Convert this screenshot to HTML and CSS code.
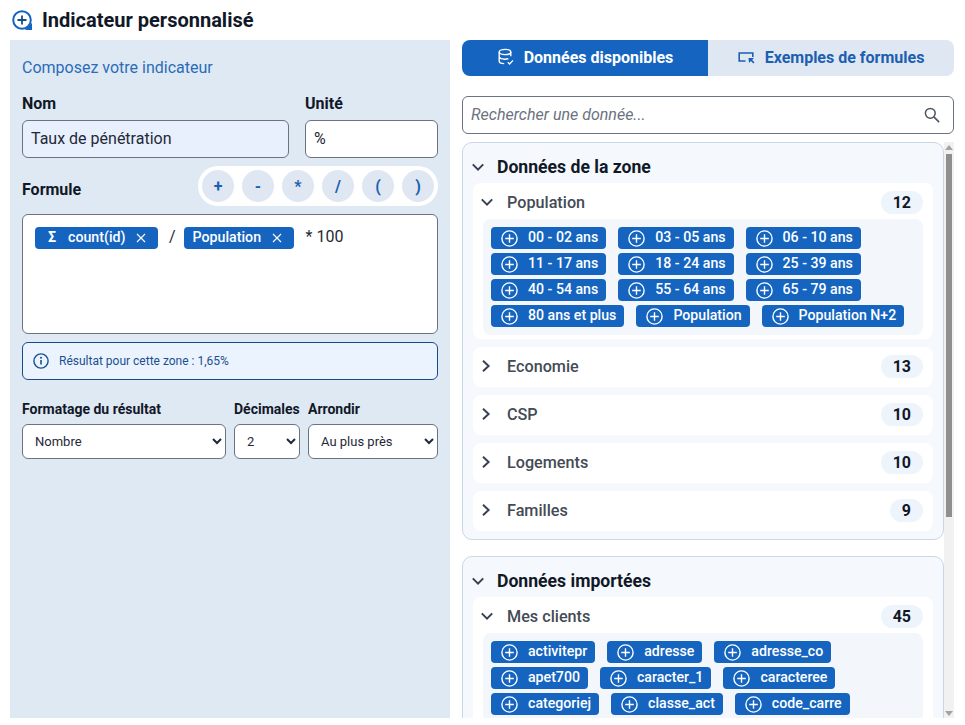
FILE: index.html

```html
<!DOCTYPE html>
<html lang="fr">
<head>
  <meta charset="UTF-8">
  <title>Indicateur personnalisé</title>
  <link rel="stylesheet" href="styles.css">
</head>
<body>

  <svg class="icon-defs" width="0" height="0">
    <symbol id="i-plus" viewBox="0 0 17 17">
      <circle cx="8.5" cy="8.5" r="7.6" fill="none" stroke="currentColor" stroke-width="1.4"/>
      <path d="M8.5 4.2v8.6M4.2 8.5h8.6" fill="none" stroke="currentColor" stroke-width="1.4"/>
    </symbol>
    <symbol id="i-close" viewBox="0 0 12 12">
      <path d="M1.2 1.2l9.6 9.6M10.8 1.2l-9.6 9.6" fill="none" stroke="currentColor" stroke-width="1.3"/>
    </symbol>
    <symbol id="i-down" viewBox="0 0 12 12">
      <path d="M.8 3.4L6 8.6l5.2-5.2" fill="none" stroke="currentColor" stroke-width="2"/>
    </symbol>
    <symbol id="i-right" viewBox="0 0 12 12">
      <path d="M2 .8L7.6 6 2 11.2" fill="none" stroke="currentColor" stroke-width="2"/>
    </symbol>
  </svg>

  <header class="page-title">
    <svg class="title-icon" viewBox="0 0 20 20">
      <circle cx="10" cy="10" r="8.8" fill="none" stroke="#1565c0" stroke-width="2"/>
      <path d="M10 5.5v9M5.5 10h9" fill="none" stroke="#1a4a8a" stroke-width="1.8"/>
      <path d="M16 16.5L20 13v7h-7z" fill="#1565c0"/>
    </svg>
    <h1>Indicateur personnalisé</h1>
  </header>

  <div class="columns">
    <section class="editor-panel">
      <h2 class="panel-title">Composez votre indicateur</h2>

      <div class="name-row">
        <label class="field field-name">
          <span class="field-label">Nom</span>
          <input class="text-input text-input-filled" type="text" value="Taux de pénétration">
        </label>
        <label class="field field-unit">
          <span class="field-label">Unité</span>
          <input class="text-input" type="text" value="%">
        </label>
      </div>

      <div class="formula-head">
        <span class="field-label">Formule</span>
        <div class="operators">
          <button class="operator">+</button>
          <button class="operator">-</button>
          <button class="operator">*</button>
          <button class="operator">/</button>
          <button class="operator">(</button>
          <button class="operator">)</button>
        </div>
      </div>

      <div class="formula-box">
        <span class="token token-count">
          <span class="sigma">Σ</span>
          count(id)
          <svg class="token-close"><use href="#i-close"/></svg>
        </span>
        <span class="formula-text formula-slash">/</span>
        <span class="token token-pop">
          Population
          <svg class="token-close"><use href="#i-close"/></svg>
        </span>
        <span class="formula-text">* 100</span>
      </div>

      <div class="result-box">
        <svg class="info-icon" viewBox="0 0 16 16">
          <circle cx="8" cy="8" r="7.1" fill="none" stroke="currentColor" stroke-width="1.4"/>
          <path d="M8 7v4.6" fill="none" stroke="currentColor" stroke-width="1.6"/>
          <circle cx="8" cy="4.7" r="1" fill="currentColor"/>
        </svg>
        Résultat pour cette zone : 1,65%
      </div>

      <div class="format-row">
        <label class="field field-format">
          <span class="field-label field-label-small">Formatage du résultat</span>
          <select class="select-input"><option>Nombre</option></select>
        </label>
        <label class="field field-decimals">
          <span class="field-label field-label-small">Décimales</span>
          <select class="select-input"><option>2</option></select>
        </label>
        <label class="field field-round">
          <span class="field-label field-label-small">Arrondir</span>
          <select class="select-input"><option>Au plus près</option></select>
        </label>
      </div>
    </section>

    <section class="data-panel">
      <div class="tabs">
        <button class="tab tab-active">
          <svg class="tab-icon" viewBox="0 0 18 18">
            <ellipse cx="8" cy="4" rx="5.8" ry="2.6" fill="none" stroke="currentColor" stroke-width="1.4"/>
            <path d="M2.2 4v9c0 1.5 2.3 2.6 5 2.6M13.8 4v4.2M2.2 8.6c0 1.5 2.6 2.6 5.8 2.6 1.2 0 2.4-.2 3.4-.5" fill="none" stroke="currentColor" stroke-width="1.4"/>
            <path d="M10.8 14.2l1.8 1.8 3.4-3.6" fill="none" stroke="currentColor" stroke-width="1.3"/>
          </svg>
          Données disponibles
        </button>
        <button class="tab">
          <svg class="tab-icon" viewBox="0 0 18 18">
            <path d="M7.5 13H1.2V5h13.6v4" fill="none" stroke="currentColor" stroke-width="1.6"/>
            <path d="M10.5 10h5.5l-1.9 1.9 2.4 2.4-1.2 1.2-2.4-2.4-1.9 1.9z" fill="currentColor"/>
          </svg>
          Exemples de formules
        </button>
      </div>

      <div class="search-box">
        <input class="search-input" type="text" placeholder="Rechercher une donnée...">
        <svg class="search-icon" viewBox="0 0 16 16">
          <circle cx="6.3" cy="6.3" r="4.9" fill="none" stroke="currentColor" stroke-width="1.5"/>
          <path d="M9.9 9.9l5.2 5.2" fill="none" stroke="currentColor" stroke-width="1.6"/>
        </svg>
      </div>

      <div class="data-list">
        <div class="data-scroll">
          <div class="data-group">
            <h3 class="group-title"><svg class="chevron-big"><use href="#i-down"/></svg>Données de la zone</h3>

            <div class="sub-card">
              <div class="sub-head">
                <svg class="chevron"><use href="#i-down"/></svg>
                <span class="sub-name">Population</span>
                <span class="count">12</span>
              </div>
              <div class="chip-list">
                <span class="chip"><svg class="chip-icon"><use href="#i-plus"/></svg>00 - 02 ans</span>
                <span class="chip"><svg class="chip-icon"><use href="#i-plus"/></svg>03 - 05 ans</span>
                <span class="chip"><svg class="chip-icon"><use href="#i-plus"/></svg>06 - 10 ans</span>
                <span class="chip"><svg class="chip-icon"><use href="#i-plus"/></svg>11 - 17 ans</span>
                <span class="chip"><svg class="chip-icon"><use href="#i-plus"/></svg>18 - 24 ans</span>
                <span class="chip"><svg class="chip-icon"><use href="#i-plus"/></svg>25 - 39 ans</span>
                <span class="chip"><svg class="chip-icon"><use href="#i-plus"/></svg>40 - 54 ans</span>
                <span class="chip"><svg class="chip-icon"><use href="#i-plus"/></svg>55 - 64 ans</span>
                <span class="chip"><svg class="chip-icon"><use href="#i-plus"/></svg>65 - 79 ans</span>
                <span class="chip"><svg class="chip-icon"><use href="#i-plus"/></svg>80 ans et plus</span>
                <span class="chip"><svg class="chip-icon"><use href="#i-plus"/></svg>Population</span>
                <span class="chip"><svg class="chip-icon"><use href="#i-plus"/></svg>Population N+2</span>
              </div>
            </div>

            <div class="sub-card">
              <div class="sub-head sub-head-closed">
                <svg class="chevron"><use href="#i-right"/></svg>
                <span class="sub-name">Economie</span>
                <span class="count">13</span>
              </div>
            </div>
            <div class="sub-card">
              <div class="sub-head sub-head-closed">
                <svg class="chevron"><use href="#i-right"/></svg>
                <span class="sub-name">CSP</span>
                <span class="count">10</span>
              </div>
            </div>
            <div class="sub-card">
              <div class="sub-head sub-head-closed">
                <svg class="chevron"><use href="#i-right"/></svg>
                <span class="sub-name">Logements</span>
                <span class="count">10</span>
              </div>
            </div>
            <div class="sub-card">
              <div class="sub-head sub-head-closed">
                <svg class="chevron"><use href="#i-right"/></svg>
                <span class="sub-name">Familles</span>
                <span class="count">9</span>
              </div>
            </div>
          </div>

          <div class="data-group">
            <h3 class="group-title"><svg class="chevron-big"><use href="#i-down"/></svg>Données importées</h3>

            <div class="sub-card">
              <div class="sub-head">
                <svg class="chevron"><use href="#i-down"/></svg>
                <span class="sub-name">Mes clients</span>
                <span class="count">45</span>
              </div>
              <div class="chip-list">
                <span class="chip"><svg class="chip-icon"><use href="#i-plus"/></svg>activitepr</span>
                <span class="chip"><svg class="chip-icon"><use href="#i-plus"/></svg>adresse</span>
                <span class="chip"><svg class="chip-icon"><use href="#i-plus"/></svg>adresse_co</span>
                <span class="chip"><svg class="chip-icon"><use href="#i-plus"/></svg>apet700</span>
                <span class="chip"><svg class="chip-icon"><use href="#i-plus"/></svg>caracter_1</span>
                <span class="chip"><svg class="chip-icon"><use href="#i-plus"/></svg>caracteree</span>
                <span class="chip"><svg class="chip-icon"><use href="#i-plus"/></svg>categoriej</span>
                <span class="chip"><svg class="chip-icon"><use href="#i-plus"/></svg>classe_act</span>
                <span class="chip"><svg class="chip-icon"><use href="#i-plus"/></svg>code_carre</span>
              </div>
            </div>
          </div>
        </div>

        <div class="scroll-rail">
          <span class="rail-arrow rail-arrow-up"></span>
          <span class="rail-thumb"></span>
          <span class="rail-arrow rail-arrow-down"></span>
        </div>
      </div>
    </section>
  </div>

</body>
</html>
```

FILE: styles.css

```css
* {
  box-sizing: border-box;
}

html, body {
  height: 100%;
}

body {
  margin: 0;
  background: #ffffff;
  color: #111827;
  font-family: Roboto, "Liberation Sans", sans-serif;
  overflow: hidden;
}

.icon-defs {
  position: absolute;
}

button {
  font-family: inherit;
  border: none;
  cursor: pointer;
}

/* title */
.page-title {
  display: flex;
  align-items: center;
  gap: 10px;
  height: 40px;
  padding-left: 12px;
}

.title-icon {
  width: 20px;
  height: 20px;
}

.page-title h1 {
  margin: 0;
  font-size: 20px;
  font-weight: 700;
  color: #111827;
}

.columns {
  display: flex;
  gap: 12px;
  height: 678px;
  padding: 0 11px 0 10px;
}

/* left panel */
.editor-panel {
  width: 440px;
  flex: none;
  background: #dfe9f4;
  padding: 18px 12px;
}

.panel-title {
  margin: 0 0 18px;
  font-size: 16px;
  line-height: 19px;
  font-weight: 400;
  color: #2b6cb8;
}

.name-row {
  display: flex;
  gap: 16px;
}

.field {
  display: flex;
  flex-direction: column;
}

.field-name {
  width: 267px;
}

.field-unit {
  flex: 1;
}

.field-label {
  font-size: 16px;
  line-height: 18px;
  font-weight: 700;
  color: #111827;
  margin-bottom: 7px;
}

.field-label-small {
  font-size: 14px;
  line-height: 16px;
  white-space: nowrap;
}

.text-input {
  width: 100%;
  height: 38px;
  padding: 0 8px 2px;
  border: 1px solid #6b7280;
  border-radius: 6px;
  background: #ffffff;
  font-family: inherit;
  font-size: 16px;
  color: #1f2937;
}

.text-input-filled {
  background: #e8f0fe;
}

.formula-head {
  display: flex;
  justify-content: space-between;
  align-items: center;
  margin-top: 8px;
}

.formula-head .field-label {
  margin: 8px 0 0;
}

.operators {
  display: flex;
  gap: 8px;
  padding: 4px;
  background: #ffffff;
  border-radius: 20px;
}

.operator {
  width: 32px;
  height: 32px;
  padding: 0;
  border-radius: 50%;
  background: #dfe7f2;
  color: #1c5fb0;
  font-size: 16px;
  font-weight: 700;
}

.formula-box {
  display: flex;
  align-items: flex-start;
  height: 120px;
  margin-top: 8px;
  padding: 12px;
  border: 1px solid #6b7280;
  border-radius: 6px;
  background: #ffffff;
}

.token {
  display: inline-flex;
  align-items: center;
  height: 22px;
  padding-bottom: 2px;
  border-radius: 4px;
  background: #1565c0;
  color: #ffffff;
  font-size: 14.2px;
  font-weight: 500;
}

.token-count {
  width: 123px;
  padding-left: 13px;
}

.token-pop {
  width: 110px;
  padding-left: 9px;
}

.sigma {
  width: 20px;
  font-weight: 700;
}

.token-close {
  width: 10px;
  height: 10px;
  margin: 2px 12px 0 auto;
}

.formula-text {
  font-size: 16px;
  line-height: 20px;
  color: #1f2937;
  margin: 0 12px;
}

.formula-slash {
  margin: 0 8px 0 11px;
}

.result-box {
  display: flex;
  align-items: center;
  gap: 10px;
  height: 38px;
  margin-top: 8px;
  padding-left: 10px;
  border: 1px solid #1a4a8a;
  border-radius: 6px;
  background: #ebf3fe;
  color: #1a4f8f;
  font-size: 12px;
}

.info-icon {
  width: 16px;
  height: 16px;
}

.format-row {
  display: flex;
  gap: 8px;
  margin-top: 21px;
}

.format-row .field-label {
  margin-bottom: 7px;
}

.field-format {
  width: 204px;
}

.field-decimals {
  width: 66px;
}

.field-round {
  flex: 1;
}

.select-input {
  width: 100%;
  height: 35px;
  padding-left: 8px;
  border: 1px solid #6b7280;
  border-radius: 6px;
  background: #ffffff;
  color: #1f2937;
  font-family: inherit;
  font-size: 13px;
}

/* right panel */
.data-panel {
  flex: 1;
  min-width: 0;
  display: flex;
  flex-direction: column;
}

.tabs {
  display: flex;
  height: 36px;
  border-radius: 8px;
  overflow: hidden;
  flex: none;
}

.tab {
  flex: 1;
  display: flex;
  align-items: center;
  justify-content: center;
  gap: 9px;
  padding: 0 0 2px;
  background: #dfe7f2;
  color: #1c5fb0;
  font-size: 16px;
  font-weight: 700;
}

.tab-active {
  background: #1565c0;
  color: #ffffff;
}

.tab-icon {
  width: 18px;
  height: 18px;
}

.search-box {
  display: flex;
  align-items: center;
  flex: none;
  height: 38px;
  margin-top: 20px;
  padding: 0 13px 0 8px;
  border: 1px solid #6b7280;
  border-radius: 6px;
}

.search-input {
  flex: 1;
  border: none;
  outline: none;
  padding: 0 0 2px;
  font-family: inherit;
  font-size: 16px;
  font-style: italic;
}

.search-input::placeholder {
  color: #6b7280;
  opacity: 1;
}

.search-icon {
  width: 16px;
  height: 16px;
  color: #4b5563;
}

.data-list {
  flex: 1;
  min-height: 0;
  margin-top: 8px;
  display: flex;
}

.data-scroll {
  flex: 1;
  min-width: 0;
  overflow: hidden;
  display: flex;
  flex-direction: column;
  gap: 16px;
}

.scroll-rail {
  flex: none;
  width: 10px;
  display: flex;
  flex-direction: column;
  align-items: center;
  background: #f1f1f1;
}

.rail-arrow {
  flex: none;
  width: 0;
  height: 0;
  border-left: 4px solid transparent;
  border-right: 4px solid transparent;
}

.rail-arrow-up {
  margin-top: 3px;
  border-bottom: 5px solid #a3a3a3;
}

.rail-arrow-down {
  margin-top: auto;
  margin-bottom: 2px;
  border-top: 5px solid #a3a3a3;
}

.rail-thumb {
  flex: none;
  width: 6px;
  height: 363px;
  margin-top: 4px;
  background: #8f8f8f;
}

.data-group {
  flex: none;
  display: flex;
  flex-direction: column;
  gap: 8px;
  padding: 0 10px 8px;
  border: 1px solid #c9d6e6;
  border-radius: 10px;
  background: #f5f9fd;
}

.group-title {
  display: flex;
  align-items: center;
  height: 40px;
  padding-top: 8px;
  margin: 0 0 -8px;
  font-size: 17.6px;
  font-weight: 700;
  color: #111827;
}

.chevron-big {
  width: 12px;
  height: 12px;
  flex: none;
  margin: 0 13px 0 -1px;
  color: #374151;
}

.sub-card {
  background: #ffffff;
  border-radius: 8px;
}

.sub-head {
  display: flex;
  align-items: center;
  height: 36px;
  padding: 2px 10px 0 8px;
}

.sub-head-closed {
  height: 40px;
  padding: 0 10px 2px 8px;
}

.chevron {
  width: 12px;
  height: 12px;
  flex: none;
  color: #374151;
}

.sub-name {
  flex: 1;
  margin-left: 14px;
  font-size: 16.2px;
  font-weight: 500;
  color: #444b55;
}

.count {
  height: 23px;
  padding: 0 12px;
  border-radius: 12px;
  background: #eef4fc;
  color: #111827;
  font-size: 16px;
  font-weight: 700;
  line-height: 23px;
}

.chip-list {
  display: flex;
  flex-wrap: wrap;
  gap: 4px 12px;
  margin: 0 10px 4px;
  padding: 8px;
  border-radius: 8px;
  background: #f3f7fb;
}

.chip {
  display: inline-flex;
  align-items: center;
  gap: 10px;
  height: 22px;
  padding: 0 8px 2px 10px;
  border-radius: 4px;
  background: #1565c0;
  color: #ffffff;
  font-size: 14.15px;
  font-weight: 500;
}

.chip-icon {
  width: 17px;
  height: 17px;
  flex: none;
  margin-top: 2px;
}
```
